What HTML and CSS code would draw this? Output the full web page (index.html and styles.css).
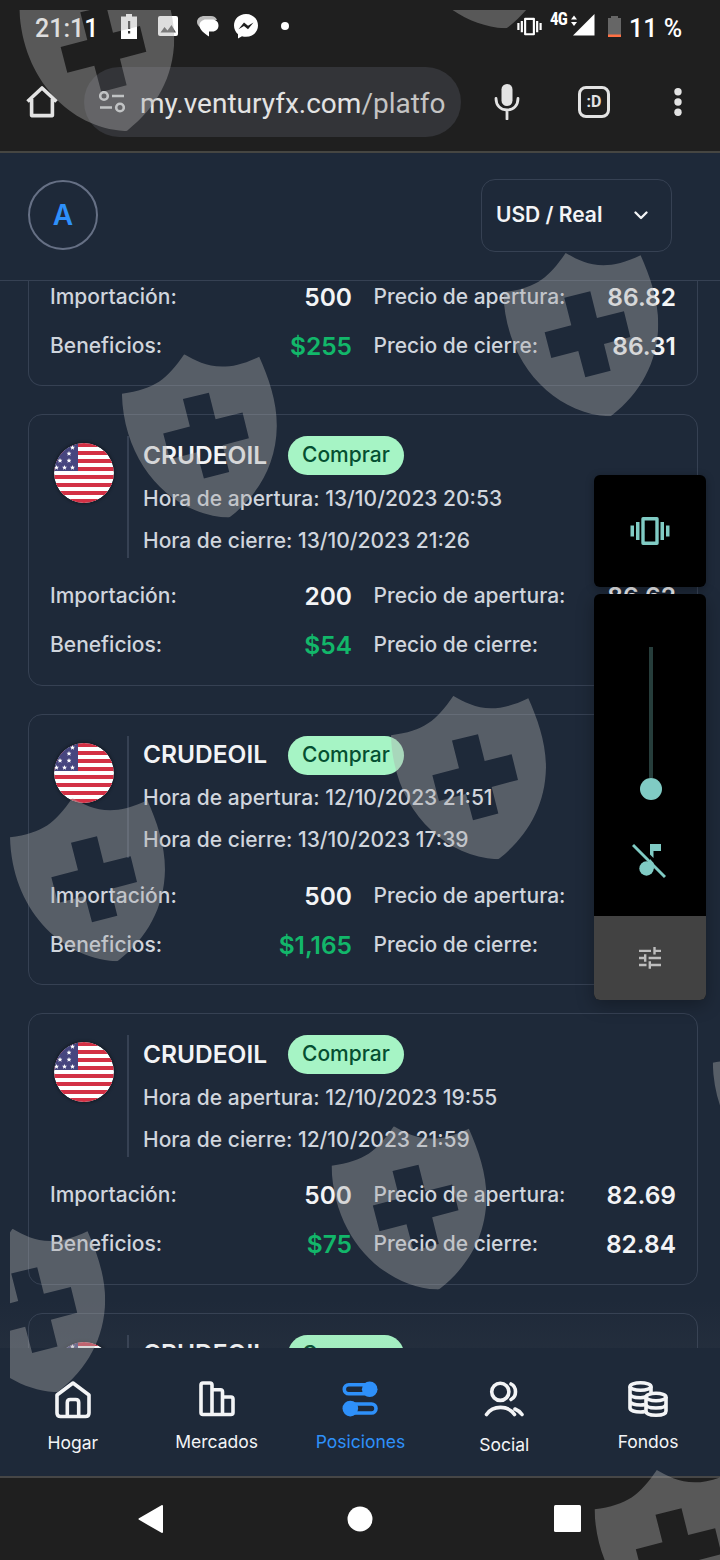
FILE: index.html
```html
<!DOCTYPE html>
<html lang="es">
<head>
  <meta charset="UTF-8">
  <title>Posiciones</title>
  <meta name="viewport" content="width=device-width, initial-scale=1.0">
  <link rel="stylesheet" href="styles.css">
</head>
<body>

<svg width="0" height="0" class="defs">
  <symbol id="shield" viewBox="0 0 465 490">
    <path fill-rule="evenodd" d="M0 118C100 105 135 75 187 0C240 30 300 62 412 7C440 70 465 140 465 215C463 330 410 420 326 487Q322 491 316 490C150 480 5 330 0 118ZM183 134L261 115L281 195L362 175L381 252L302 273L322 353L246 373L225 294L144 315L124 238L204 217Z"/>
  </symbol>
  <symbol id="vibrate" viewBox="0 0 40 28">
    <path fill="none" stroke="currentColor" stroke-width="3.4" d="M13 1.7H27V26.3H13Z" stroke-linejoin="round"/>
    <path fill="currentColor" d="M0.500 8.500h3.500v11h-3.500zM6 5h3.500v18h-3.500zM30.500 5h3.500v18h-3.500zM36 8.500h3.500v11h-3.500z"/>
  </symbol>
  <symbol id="star" viewBox="-5 -5 10 10">
    <path fill="#fff" d="M0-5L1.400-1.600L5-1.500L2.200.8L3.200 4.500L0 2.400L-3.200 4.500L-2.200.8L-5-1.500L-1.400-1.600Z"/>
  </symbol>
  <symbol id="flag" viewBox="0 0 60 60">
    <clipPath id="round"><circle cx="30" cy="30" r="30"/></clipPath>
    <g clip-path="url(#round)">
      <rect width="60" height="60" fill="#fff"/>
      <path fill="#d33145" d="M0 0h60v4H0zM0 8h60v4H0zM0 16h60v4H0zM0 24h60v4H0zM0 32h60v4H0zM0 40h60v4H0zM0 48h60v4H0zM0 56h60v4H0z"/>
      <rect width="24" height="28" fill="#47467f"/>
      <use href="#star" x="16" y="2" width="5" height="5"/>
      <use href="#star" x="12.500" y="8" width="5" height="5"/>
      <use href="#star" x="3.500" y="15" width="5" height="5"/>
      <use href="#star" x="12.500" y="15" width="5" height="5"/>
      <use href="#star" x="0" y="22" width="5" height="5"/>
      <use href="#star" x="8" y="22" width="5" height="5"/>
      <use href="#star" x="16" y="22" width="5" height="5"/>
    </g>
  </symbol>
</svg>

<div class="phone">

  <!-- Status bar -->
  <div class="status">
    <span class="clock">21:11</span>
    <svg class="st-batt" width="16" height="25" viewBox="0 0 16 25"><path fill="#fff" d="M5 0h6v2.500h5V25H0V2.500h5z"/><path fill="#333" d="M7 7h2.200v8H7zM7 17h2.200v2.500H7z"/></svg>
    <svg class="st-img" width="20" height="20" viewBox="0 0 20 20"><rect width="20" height="20" rx="2" fill="#fff"/><path fill="#5a5a5a" d="M2.500 16.500L6.500 11l3 3.500 4-5.500 4.500 7.500z"/></svg>
    <svg class="st-chat" width="22" height="21" viewBox="0 0 22 21"><path fill="#bbb" d="M7 0h7c3 0 5 1.500 6 4H9C5 4 3 7 4 12C1 10 0 8 0 6C0 2 4 0 7 0z"/><path fill="#fff" d="M9 3.500h6c4 0 6.500 2.500 6.500 6s-2.500 6-6 6h-3.500V20.500C8 18 2.500 14 2.500 9.500c0-3.500 3-6 6.500-6z"/></svg>
    <svg class="st-msgr" width="24" height="25" viewBox="0 0 24 25"><path fill="#fff" d="M12 0C5 0 0 5 0 11.600c0 3.600 1.500 6.500 4 8.600V24.500l4-2.200c1.300.4 2.600.5 4 .5 7 0 12-4.800 12-11.200S19 0 12 0z"/><path fill="#1f1f1f" d="M4.500 15.200L10 8.500l4 3.200 5.500-3.200L14 15.200 10 12z"/></svg>
    <span class="dot"></span>
    <svg class="st-vib" width="25" height="19"><use href="#vibrate" width="25" height="19"/></svg>
    <span class="net">4G</span>
    <svg class="st-sig" width="24" height="23" viewBox="0 0 24 23"><path fill="#fff" d="M23.500 1V22.500H2zM0 6.500L3 2.500 6 6.500zM0 9L3 13 6 9z"/></svg>
    <svg class="st-low" width="13" height="21" viewBox="0 0 13 21"><path fill="#666" d="M3 0h7v2h3v19H0V2h3z"/><path fill="#ff7043" d="M0 18.500h13V21H0z"/></svg>
    <span class="pct">11 %</span>
  </div>

  <!-- Browser bar -->
  <div class="browser">
    <svg class="b-home" width="32" height="32" viewBox="0 0 32 32"><path fill="none" stroke="#e3e3e3" stroke-width="3.600" stroke-linejoin="round" d="M1.500 15.500L16 2l14.500 13.500M5.600 13V29.600H26.400V13"/></svg>
    <div class="url">
      <svg width="26" height="22" viewBox="0 0 26 22"><g fill="none" stroke="#d0d3d5" stroke-width="2.600"><circle cx="5" cy="5" r="3.800"/><circle cx="21" cy="16.500" r="3.800"/><path d="M13 5h12M1 16.500h12"/></g></svg>
      <span>my.venturyfx.com<i>/platfo</i></span>
    </div>
    <svg class="b-mic" width="26" height="36" viewBox="0 0 26 36"><rect x="7.500" y="0" width="11" height="22" rx="5.500" fill="#e3e3e3"/><path fill="none" stroke="#e3e3e3" stroke-width="2.800" d="M2 14.500c0 7 4.500 11.500 11 11.500s11-4.500 11-11.500M13 26v9" stroke-linecap="round"/></svg>
    <div class="tabs">:D</div>
    <svg class="b-more" width="8" height="28" viewBox="0 0 8 28"><g fill="#e3e3e3"><circle cx="4" cy="3.700" r="3.700"/><circle cx="4" cy="14" r="3.700"/><circle cx="4" cy="24.300" r="3.700"/></g></svg>
  </div>

  <!-- App header -->
  <header class="topbar">
    <div class="avatar">A</div>
    <div class="account">
      <span>USD / Real</span>
      <svg width="14" height="9" viewBox="0 0 14 9"><path fill="none" stroke="#f3f4f6" stroke-width="2.300" stroke-linecap="round" stroke-linejoin="round" d="M1.500 1.500L7 7l5.500-5.500"/></svg>
    </div>
  </header>

  <!-- Positions -->
  <main class="list">
    <section class="card card-first">
      <div class="grid">
        <span>Importación:</span><b>500</b><span>Precio de apertura:</span><b>86.82</b>
        <span>Beneficios:</span><b class="up">$255</b><span>Precio de cierre:</span><b>86.31</b>
      </div>
    </section>

    <section class="card">
      <div class="head">
        <svg class="flag" width="60" height="60"><use href="#flag"/></svg>
        <div class="info">
          <div class="title"><strong>CRUDEOIL</strong><em>Comprar</em></div>
          <p>Hora de apertura: 13/10/2023 20:53</p>
          <p>Hora de cierre: 13/10/2023 21:26</p>
        </div>
      </div>
      <div class="grid">
        <span>Importación:</span><b>200</b><span>Precio de apertura:</span><b>86.62</b>
        <span>Beneficios:</span><b class="up">$54</b><span>Precio de cierre:</span><b></b>
      </div>
    </section>

    <section class="card">
      <div class="head">
        <svg class="flag" width="60" height="60"><use href="#flag"/></svg>
        <div class="info">
          <div class="title"><strong>CRUDEOIL</strong><em>Comprar</em></div>
          <p>Hora de apertura: 12/10/2023 21:51</p>
          <p>Hora de cierre: 13/10/2023 17:39</p>
        </div>
      </div>
      <div class="grid">
        <span>Importación:</span><b>500</b><span>Precio de apertura:</span><b></b>
        <span>Beneficios:</span><b class="up">$1,165</b><span>Precio de cierre:</span><b></b>
      </div>
    </section>

    <section class="card">
      <div class="head">
        <svg class="flag" width="60" height="60"><use href="#flag"/></svg>
        <div class="info">
          <div class="title"><strong>CRUDEOIL</strong><em>Comprar</em></div>
          <p>Hora de apertura: 12/10/2023 19:55</p>
          <p>Hora de cierre: 12/10/2023 21:59</p>
        </div>
      </div>
      <div class="grid">
        <span>Importación:</span><b>500</b><span>Precio de apertura:</span><b>82.69</b>
        <span>Beneficios:</span><b class="up">$75</b><span>Precio de cierre:</span><b>82.84</b>
      </div>
    </section>

    <section class="card">
      <div class="head">
        <svg class="flag" width="60" height="60"><use href="#flag"/></svg>
        <div class="info">
          <div class="title"><strong>CRUDEOIL</strong><em>Comprar</em></div>
        </div>
      </div>
    </section>
    <div class="fade"></div>
  </main>

  <!-- App tabs -->
  <nav class="tabbar">
    <a class="low"><svg width="36" height="38" viewBox="0 0 36 38"><g fill="none" stroke="#f3f4f6" stroke-width="3.600" stroke-linejoin="round"><path d="M2 14L18 2L34 14V32q0 3.500-3.500 3.500h-25Q2 35.500 2 32Z"/><path d="M12.300 35V21.500q0-3 3-3h5.400q3 0 3 3V35"/></g></svg>Hogar</a>
    <a><svg width="36" height="36" viewBox="0 0 36 36"><g fill="none" stroke="#f3f4f6" stroke-width="3.600" stroke-linejoin="round"><path d="M2 4q0-2 2-2h7q2 0 2 2V33.500H4q-2 0-2-2zM13 8.700h8.500q2 0 2 2V33.500H13M23.500 16H32q2 0 2 2v13.500q0 2-2 2h-8.500"/></g></svg>Mercados</a>
    <a class="on"><svg width="36" height="36" viewBox="0 0 36 36"><g fill="none" stroke="#2e90fa" stroke-width="3.600"><rect x="2.300" y="3.800" width="31" height="9" rx="4.500"/><rect x="3" y="23" width="31" height="9" rx="4.500"/></g><g fill="#2e90fa"><circle cx="27.700" cy="8.200" r="7.800"/><circle cx="8.300" cy="27.600" r="7.800"/></g></svg>Posiciones</a>
    <a class="lower"><svg width="40" height="36" viewBox="0 0 40 36"><g fill="none" stroke="#f3f4f6" stroke-width="3.600" stroke-linecap="round"><circle cx="16.300" cy="10.800" r="8.600"/><path d="M2.500 33.500C9 24 24 24 30.500 33.500M27 3c6 3 6 12.500 0 15.500M31 28q4 1.500 7 5.500"/></g></svg>Social</a>
    <a><svg width="40" height="36" viewBox="0 0 40 36"><g fill="none" stroke="#f3f4f6" stroke-width="3.600"><ellipse cx="12.500" cy="5.500" rx="10.500" ry="3.700"/><path d="M2 5.500V27c0 2.500 5 4 10.500 4q2.500 0 4.500-.5M23 5.500V12M2 12.500c0 3 5 4.200 10.500 4.200q4 0 6-1M2 20c0 2.500 5 4 10.500 4q2.500 0 4.500-.5"/><ellipse cx="28" cy="16" rx="10" ry="3.700"/><path d="M18 16v14c0 3 5 4.200 10 4.200s10-1.200 10-4.200V16M18 23c0 3 5 4 10 4s10-1 10-4"/></g></svg>Fondos</a>
  </nav>

  <!-- Android buttons -->
  <div class="sysnav">
    <svg width="26" height="28" viewBox="0 0 26 28"><path fill="#fff" stroke="#fff" stroke-width="2" stroke-linejoin="round" d="M1.500 14L24 1V27z"/></svg>
    <svg class="circle" width="26" height="26" viewBox="0 0 26 26"><circle cx="13" cy="13" r="12.500" fill="#fff"/></svg>
    <svg width="27" height="27" viewBox="0 0 27 27"><rect width="27" height="27" rx="1.500" fill="#fff"/></svg>
  </div>

  <!-- Shields -->
  <svg class="shields" width="710" height="1550" viewBox="10 10 710 1550">
    <use href="#shield" x="19.300" y="-32.300" width="155" height="163.300"/>
    <use href="#shield" x="399.300" y="-135" width="155" height="163.300"/>
    <use href="#shield" x="503.300" y="253" width="155" height="163.300"/>
    <use href="#shield" x="121.900" y="354.300" width="155" height="163.300"/>
    <use href="#shield" x="391" y="695.900" width="155" height="163.300"/>
    <use href="#shield" x="10" y="798" width="155" height="163.300"/>
    <use href="#shield" x="712.700" y="1023.300" width="155" height="163.300"/>
    <use href="#shield" x="331.500" y="1126.300" width="155" height="163.300"/>
    <use href="#shield" x="-49.800" y="1228.800" width="155" height="163.300"/>
    <use href="#shield" x="594.500" y="1470" width="155" height="163.300"/>
  </svg>

  <!-- Volume panel -->
  <div class="volume">
    <div class="ringer"><svg width="40" height="28"><use href="#vibrate" width="40" height="28"/></svg></div>
    <div class="slider-box">
      <div class="slider"><div class="track"></div><div class="thumb"></div></div>
      <svg class="mute" width="34" height="36" viewBox="0 0 34 36"><path fill="#80cbc4" d="M18 1h11v7h-7.500v7L18 11.500z"/><circle cx="14.500" cy="25.500" r="7.200" fill="#80cbc4"/><path fill="#80cbc4" d="M18 16l3.700 4v6H18z"/><path stroke="#80cbc4" stroke-width="3" d="M1 2L33 34"/></svg>
      <div class="settings"><svg width="22" height="22" viewBox="0 0 22 22"><path fill="#bdbdbd" d="M0 2.700h12v2.400H0zM14.300 0h2.400v7.500h-2.400zM16 2.700h6v2.400h-6zM0 9.800h6v2.400H0zM5 7.300h2.400v7.500H5zM9.600 9.800H22v2.400H9.600zM0 16.800h7.500v2.400H0zM9.600 14.300H12v7.500H9.600zM12 16.800h10v2.400H12z"/></svg></div>
    </div>
  </div>

</div>

</body>
</html>
```

FILE: styles.css
```css
* { box-sizing: border-box; }
body { margin: 0; background: #1f1f1f; font-family: Inter, sans-serif; color: #f3f4f6; }
svg { display: block; flex-shrink: 0; }
.defs { position: absolute; }
.phone { position: relative; width: 720px; height: 1560px; overflow: hidden; display: flex; flex-direction: column; background: #1f1f1f; }

/* status bar */
.status { height: 52px; display: flex; align-items: center; padding-left: 35px; font-family: Roboto, sans-serif; font-size: 25px; font-weight: 500; color: #fff; }
.clock { width: 86px; padding-top: 4px; }
.st-img { margin-left: 21px; }
.st-chat { margin-left: 19px; }
.st-msgr { margin-left: 15px; }
.dot { width: 8px; height: 8px; border-radius: 50%; background: #fff; margin-left: 23px; }
.st-vib { margin-left: 228px; }
.net { font-family: "Roboto Condensed", Roboto, sans-serif; font-size: 19px; font-weight: 700; width: 21px; margin-left: 8px; margin-bottom: 16px; letter-spacing: -1px; transform: scaleX(0.9); transform-origin: left; }
.st-sig { margin-bottom: 4px; }
.st-low { margin-left: 13px; }
.pct { margin-left: 8px; padding-top: 4px; white-space: nowrap; }

/* browser bar */
.browser { height: 101px; display: flex; align-items: center; padding-left: 26px; border-bottom: 2px solid #464642; }
.url { width: 377px; height: 70px; margin-left: 26px; border-radius: 35px; background: #333438; display: flex; align-items: center; gap: 15px; padding: 3px 0 0 15px; font-family: Roboto, sans-serif; font-size: 28px; color: #e3e3e3; white-space: nowrap; }
.url i { font-style: normal; color: #c4c4c4; }
.url svg { margin-top: -3px; }
.b-mic { margin-left: 33px; }
.tabs { width: 32px; height: 32px; margin-left: 58px; border: 3px solid #e3e3e3; border-radius: 8px; font: 700 16px/26px Roboto, sans-serif; text-align: center; color: #e3e3e3; }
.b-more { margin-left: 64px; margin-top: 1px; }

/* header */
.topbar { height: 128px; flex-shrink: 0; display: flex; align-items: center; justify-content: space-between; padding: 0 48px 3px 28px; background: #1e2939; border-bottom: 1px solid #364153; }
.avatar { width: 70px; height: 70px; border: 2px solid #667085; border-radius: 50%; color: #2e90fa; font-size: 28px; font-weight: 600; line-height: 66px; text-align: center; }
.account { width: 191px; height: 73px; border: 1px solid #364153; border-radius: 14px; display: flex; align-items: center; padding-left: 14px; font-size: 21px; font-weight: 600; }
.account span { width: 138px; margin-top: -2px; }

/* position cards */
.list { position: relative; flex: 1; overflow: hidden; background: #1e2939; padding: 0 22px 0 28px; display: flex; flex-direction: column; gap: 28px; }
.card { height: 271.5px; flex-shrink: 0; border: 1px solid #364153; border-radius: 14px; padding: 21px; }
.card-first { height: 106px; margin-top: -1px; padding-top: 0; border-top: 0; border-radius: 0 0 14px 14px; }
.head { display: flex; }
.flag { margin: 7px 13.5px 0 3.5px; border-radius: 50%; box-shadow: 0 0 3px 1px rgba(0,0,0,0.35); }
.info { height: 122px; border-left: 2px solid #364153; padding-left: 14px; }
.title { display: flex; align-items: center; height: 39px; }
.title strong { width: 145px; font-size: 24.5px; font-weight: 600; margin-top: -2px; }
.title em { height: 39px; padding: 0 14px; border-radius: 20px; background: #a6f4c5; color: #054f31; font-style: normal; font-size: 21px; font-weight: 500; line-height: 37px; }
.info p { margin: 0; font-size: 21px; font-weight: 500; line-height: 42px; color: #d0d5dd; white-space: nowrap; }
.info p:nth-child(2) { margin-top: 2.5px; }
.grid { display: grid; grid-template-columns: 140px 162px 214px 110px; grid-auto-rows: 49px; line-height: 49px; margin-top: 13px; }
.card-first .grid { margin-top: -8px; }
.grid span { font-size: 21px; font-weight: 500; color: #d0d5dd; white-space: nowrap; }
.grid span:nth-child(4n+3) { padding-left: 21.5px; }
.grid b { font-size: 24.5px; font-weight: 600; text-align: right; padding-top: 1.3px; }
.grid .up { color: #12b76a; }
.fade { position: absolute; left: 0; right: 0; bottom: 0; height: 48px; background: linear-gradient(rgba(120,120,120,0), rgba(120,120,120,0.06)); }

/* bottom tabs */
.tabbar { height: 130px; display: flex; background: #1e2939; border-bottom: 2px solid #464646; padding-left: 1px; }
.tabbar a { flex: 1; display: flex; flex-direction: column; align-items: center; padding-top: 32.5px; font-size: 17.5px; line-height: 22px; gap: 14.5px; }
.tabbar .low { gap: 13.5px; }
.tabbar .lower { gap: 17.5px; }
.tabbar .on { color: #2e90fa; }

.sysnav { height: 82px; display: flex; align-items: center; padding: 0 139px 1px 138px; justify-content: space-between; }
.circle { margin-left: 2px; }

/* overlays */
.shields { position: absolute; left: 10px; top: 10px; overflow: hidden; fill: #adadad; opacity: 0.4; }
.volume { position: absolute; left: 594px; top: 475px; width: 112px; color: #80cbc4; display: flex; flex-direction: column; gap: 7px; }
.ringer { height: 112px; border-radius: 6px; background: #000; display: flex; align-items: center; justify-content: center; box-shadow: 0 2px 8px rgba(0,0,0,0.3); }
.slider-box { height: 406px; border-radius: 6px; background: #000; overflow: hidden; display: flex; flex-direction: column; align-items: center; box-shadow: 0 5px 18px rgba(0,0,0,0.3); }
.slider { margin: 53px 0 0 2px; display: flex; flex-direction: column; align-items: center; }
.track { width: 4px; height: 131px; background: #263d3b; }
.thumb { width: 22px; height: 22px; border-radius: 50%; background: #80cbc4; }
.mute { margin-top: 43px; margin-right: 2px; }
.settings { width: 100%; height: 84px; margin-top: auto; background: #424242; display: flex; align-items: center; justify-content: center; }
```
